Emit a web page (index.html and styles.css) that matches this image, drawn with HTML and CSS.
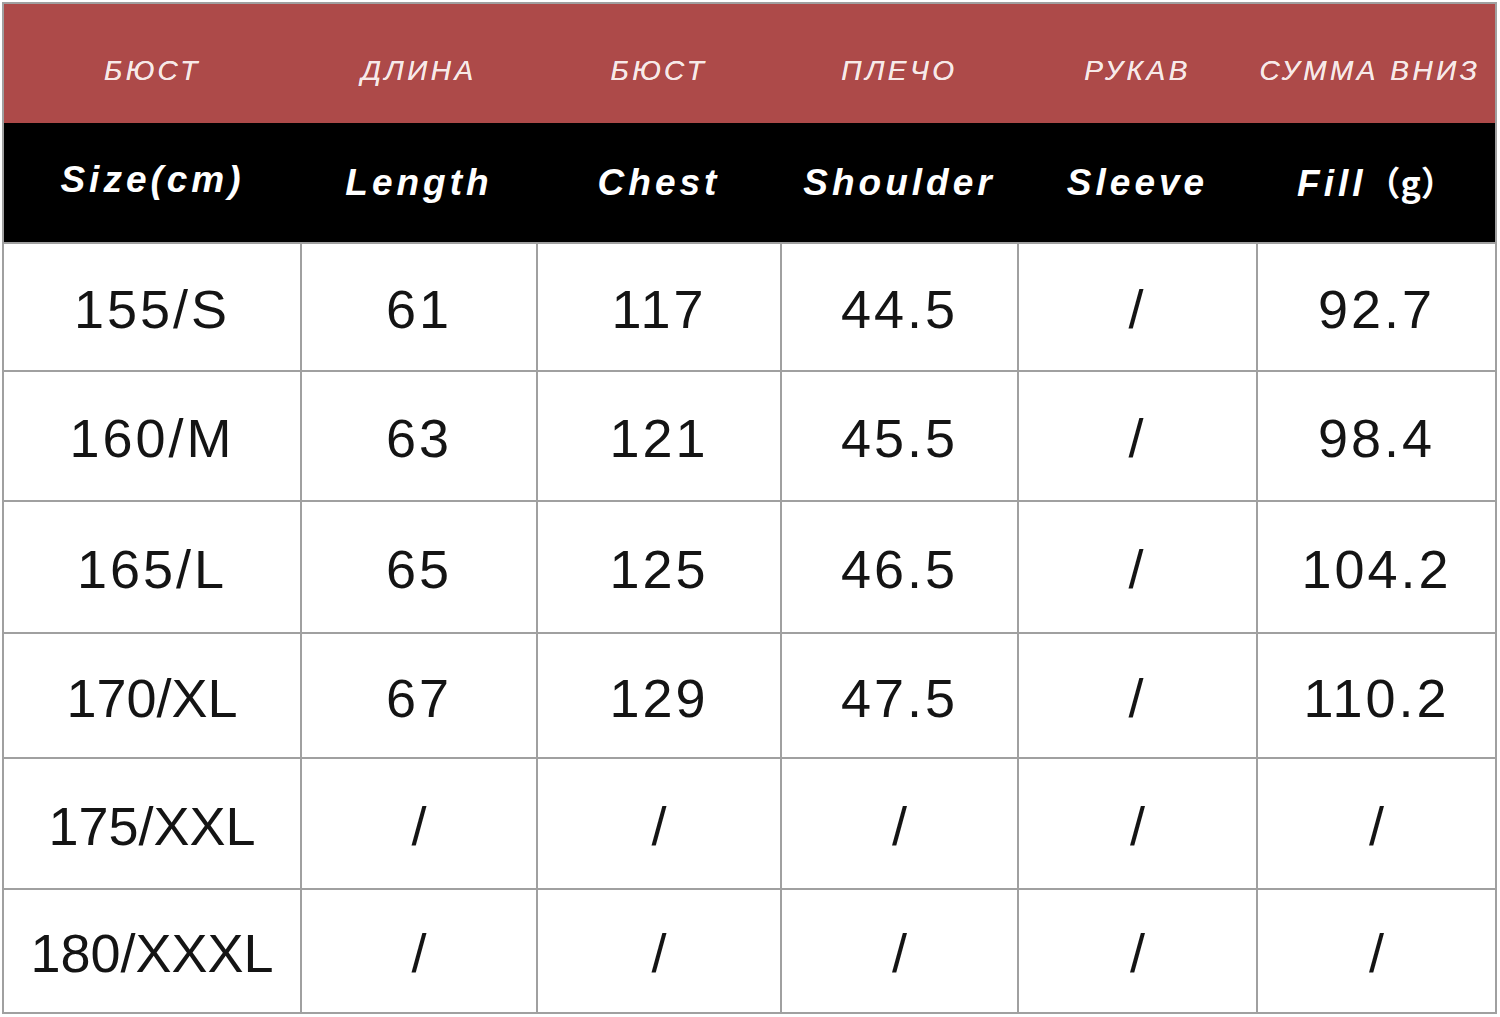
FILE: index.html
```html
<!DOCTYPE html>
<html lang="ru">
<head>
<meta charset="utf-8">
<title>Size chart</title>
<link rel="stylesheet" href="styles.css">
</head>
<body>
<div class="page">
<table class="chart">
  <colgroup>
    <col class="c1"><col class="c2"><col class="c3"><col class="c4"><col class="c5"><col class="c6">
  </colgroup>
  <thead>
    <tr class="ru">
      <th>БЮСТ</th><th>ДЛИНА</th><th>БЮСТ</th><th>ПЛЕЧО</th><th>РУКАВ</th><th class="last">СУММА ВНИЗ</th>
    </tr>
    <tr class="en">
      <th class="first">Size(cm)</th><th>Length</th><th>Chest</th><th>Shoulder</th><th>Sleeve</th><th>Fill<span class="paren">（g）</span></th>
    </tr>
  </thead>
  <tbody>
    <tr class="r1 sp"><td>155/S</td><td>61</td><td>117</td><td>44.5</td><td>/</td><td>92.7</td></tr>
    <tr class="r2 sp"><td>160/M</td><td>63</td><td>121</td><td>45.5</td><td>/</td><td>98.4</td></tr>
    <tr class="r3 sp"><td>165/L</td><td>65</td><td>125</td><td>46.5</td><td>/</td><td>104.2</td></tr>
    <tr class="r4 sp2"><td class="tight">170/XL</td><td>67</td><td>129</td><td>47.5</td><td>/</td><td>110.2</td></tr>
    <tr class="r5"><td>175/XXL</td><td>/</td><td>/</td><td>/</td><td>/</td><td>/</td></tr>
    <tr class="r6"><td>180/XXXL</td><td>/</td><td>/</td><td>/</td><td>/</td><td>/</td></tr>
  </tbody>
</table>
</div>
</body>
</html>
```

FILE: styles.css
```css
html, body {
  margin: 0;
  padding: 0;
  background: #ffffff;
}

.page {
  padding: 2px 0 0 2px;
}

.chart {
  border-collapse: collapse;
  table-layout: fixed;
  width: 1493px;
  font-family: "Liberation Sans", Arial, sans-serif;
  border: 2px solid #a0a0a0;
}

.c1 { width: 298px; }
.c2 { width: 236px; }
.c3 { width: 244px; }
.c4 { width: 237px; }
.c5 { width: 239px; }
.c6 { width: 239px; }

.chart th {
  padding: 0;
  text-align: center;
  vertical-align: middle;
  font-style: italic;
  border: none;
}

.ru th {
  background: #ad4a49;
  color: #f7e9e8;
  height: 120px;
  font-size: 28px;
  font-weight: normal;
  letter-spacing: 3.5px;
  padding-top: 14px;
  box-sizing: border-box;
  text-shadow: 0 0 0.6px #f7e9e8;
}

.ru th.last {
  padding-right: 12px;
}

.en th {
  background: #000000;
  color: #ffffff;
  height: 119px;
  font-size: 37px;
  line-height: 40px;
  font-weight: bold;
  letter-spacing: 4px;
}

.en th.first {
  padding-bottom: 6px;
  box-sizing: border-box;
}

.en .paren {
  font-style: normal;
  letter-spacing: 0;
  font-family: "Noto Sans CJK SC", "Liberation Sans", sans-serif;
  font-weight: bold;
  font-size: 34px;
  line-height: 40px;
}

.chart td {
  border: 2px solid #a0a0a0;
  text-align: center;
  vertical-align: middle;
  font-size: 54px;
  color: #141414;
  padding: 4px 0 0 0;
  box-sizing: border-box;
}

.sp td, .sp2 td { letter-spacing: 3px; }
.sp2 td.tight { letter-spacing: 0; }

.r1 td { height: 128px; }
.r2 td { height: 130px; }
.r3 td { height: 132px; }
.r4 td { height: 125px; }
.r5 td { height: 131px; }
.r6 td { height: 124px; }
```
